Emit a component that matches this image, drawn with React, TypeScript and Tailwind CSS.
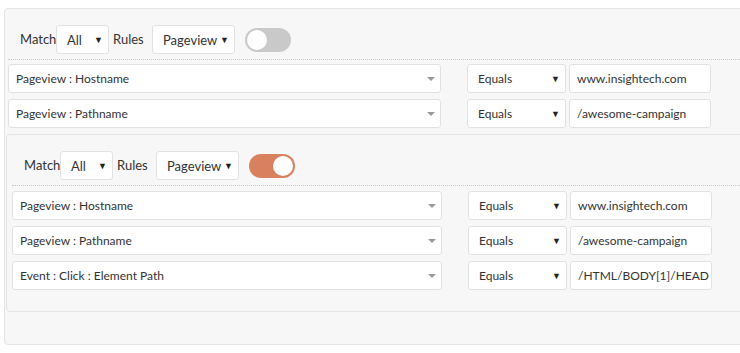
import React from 'react';

type Rule = { field: string; value: string };

const outerRules: Rule[] = [
  { field: 'Pageview : Hostname', value: 'www.insightech.com' },
  { field: 'Pageview : Pathname', value: '/awesome-campaign' },
];

const nestedRules: Rule[] = [
  { field: 'Pageview : Hostname', value: 'www.insightech.com' },
  { field: 'Pageview : Pathname', value: '/awesome-campaign' },
  { field: 'Event : Click : Element Path', value: '/HTML/BODY[1]/HEAD' },
];

const Caret = () => <span className="text-[9px] leading-none text-[#222]">▼</span>;

const SmallSelect = ({ label, width }: { label: string; width: string }) => (
  <div className={`${width} h-[29px] bg-white border border-[#e2e2e2] rounded-[3px] flex items-center justify-between pl-[10px] pr-[5px]`}>
    <span className="mt-[3px] text-[13px]">{label}</span>
    <Caret />
  </div>
);

const Toggle = ({ on }: { on: boolean }) => (
  <div
    className={`w-[46px] h-[24px] rounded-full flex items-center px-[2px] ${
      on ? 'bg-[#d9805f] justify-end' : 'bg-[#c9c9c9] justify-start'
    }`}
  >
    <div className="w-[20px] h-[20px] rounded-full bg-white" />
  </div>
);

const Header = ({ on }: { on: boolean }) => (
  <div className="flex items-center h-[29px] text-[13px]">
    <span className="w-[36px]">Match</span>
    <SmallSelect label="All" width="w-[53px]" />
    <span className="ml-[4px] w-[39px]">Rules</span>
    <SmallSelect label="Pageview" width="w-[83px]" />
    <div className="ml-[10px]">
      <Toggle on={on} />
    </div>
  </div>
);

const RuleRow = ({ rule, fieldWidth }: { rule: Rule; fieldWidth: string }) => (
  <div className="flex items-center h-[29px]">
    <div className={`${fieldWidth} h-[29px] bg-white border border-[#e2e2e2] rounded-[3px] flex items-center justify-between pl-[7px] pr-[5px]`}>
      <span>{rule.field}</span>
      <span className="w-0 h-0 border-l-[4px] border-r-[4px] border-t-[4px] border-l-transparent border-r-transparent border-t-[#999]" />
    </div>
    <div className="ml-[26px] w-[99px] h-[29px] bg-white border border-[#e2e2e2] rounded-[3px] flex items-center justify-between pl-[10px] pr-[5px]">
      <span>Equals</span>
      <Caret />
    </div>
    <div className="ml-[3px] w-[142px] h-[29px] bg-white border border-[#e2e2e2] rounded-[3px] flex items-center pl-[7px]">
      <span>{rule.value}</span>
    </div>
  </div>
);

export default function App() {
  return (
    <div className="w-[740px] h-[353px] overflow-hidden bg-white text-[12px] text-[#333] font-['Lato','Liberation_Sans',sans-serif]">
      <div className="ml-[4px] mt-[8px] w-[760px] h-[337px] bg-[#f7f7f7] border border-[#e4e4e4] rounded-[4px] px-[3px]">
        <div className="pl-[12px] pt-[16px]">
          <Header on={false} />
        </div>
        <div className="mt-[5px] border-t border-dotted border-[#c8c8c8]" />
        <div className="mt-[4px] flex flex-col gap-[6px]">
          {outerRules.map(r => (
            <RuleRow key={r.field} rule={r} fieldWidth="w-[433px]" />
          ))}
        </div>

        {/* Nested group */}
        <div className="mt-[6px] -ml-[2px] h-[178px] bg-[#f7f7f7] border border-[#e4e4e4] rounded-[4px] px-[5px]">
          <div className="pl-[12px] pt-[16px]">
            <Header on={true} />
          </div>
          <div className="mt-[5px] border-t border-dotted border-[#c8c8c8]" />
          <div className="mt-[5px] flex flex-col gap-[6px]">
            {nestedRules.map(r => (
              <RuleRow key={r.field} rule={r} fieldWidth="w-[430px]" />
            ))}
          </div>
        </div>
      </div>
    </div>
  );
}
